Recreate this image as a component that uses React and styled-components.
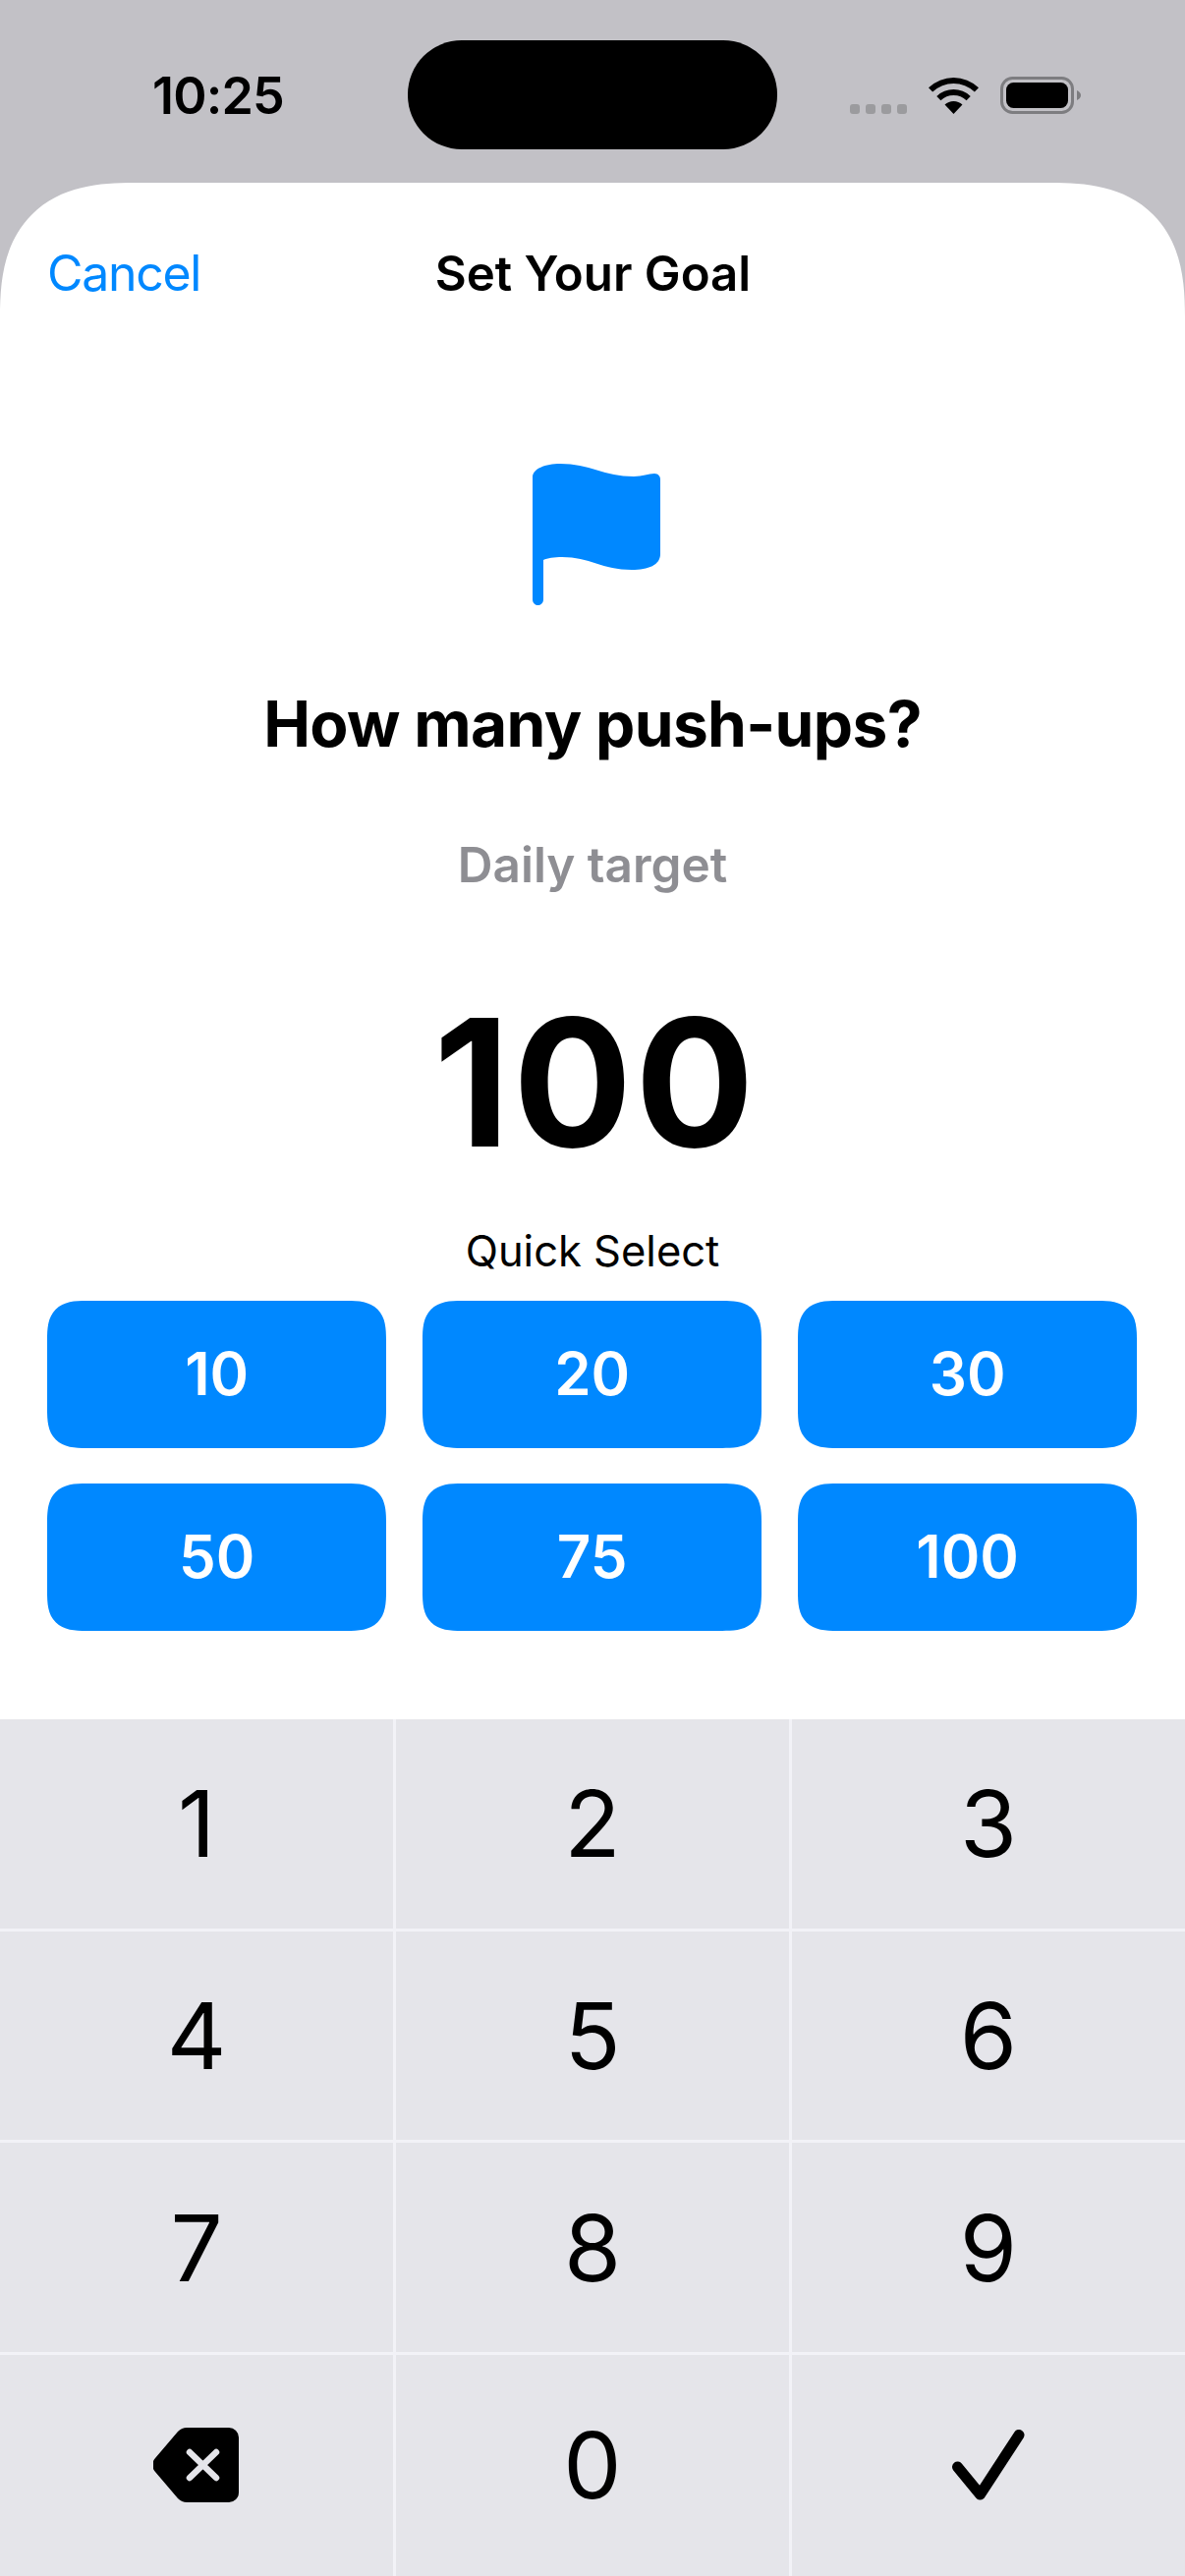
import React from 'react';
import styled, { createGlobalStyle } from 'styled-components';

const Global = createGlobalStyle`
  html, body { margin: 0; padding: 0; background: #c2c1c6; }
  * { box-sizing: border-box; }
  body { font-family: Inter, "Liberation Sans", sans-serif; -webkit-font-smoothing: antialiased; }
`;
const Screen = styled.div`
  width: 1206px; height: 2622px; overflow: hidden; background: #c2c1c6;
  display: flex; flex-direction: column;
`;
const StatusBar = styled.div`
  height: 186px; flex: none; padding-top: 41px;
  display: grid; grid-template-columns: 415px 376px 1fr; align-items: start;
`;
const Time = styled.div`
  font-size: 52px; line-height: 60px; font-weight: 600; color: #000; letter-spacing: -0.8px;
  text-align: left; padding: 27px 0 0 155px;
`;
const Island = styled.div`
  width: 376px; height: 111px; background: #000; border-radius: 55px;
`;
const StatusIcons = styled.div`
  display: flex; align-items: flex-start; padding: 37px 0 0 74px;
`;
const Signal = styled.div`
  display: flex; gap: 6px; margin-top: 28px; margin-right: 22px;
`;
const Dot = styled.span`
  width: 10px; height: 10px; border-radius: 3px; background: #9b9b9e;
`;
const WifiSvg = styled.svg`
  width: 51px; height: 37px; margin-top: 1px; margin-right: 22px; display: block;
`;
const BatterySvg = styled.svg`
  width: 83px; height: 38px; display: block;
`;
const Sheet = styled.div`
  flex: 1; min-height: 0; background: #fff; border-radius: 136px 136px 0 0; corner-shape: superellipse(1.35);
  display: flex; flex-direction: column; align-items: stretch;
`;
const Header = styled.div`
  height: 100px; padding: 61px 48px 0 50px; position: relative;
  display: flex; justify-content: center;
`;
const Cancel = styled.div`
  position: absolute; left: 48px; top: 61px;
  font-size: 50px; line-height: 62px; color: #0088ff; font-weight: 400; letter-spacing: -1.3px;
`;
const Title = styled.div`
  font-size: 49.2px; line-height: 62px; color: #000; font-weight: 600; white-space: nowrap; margin-left: -1px;
`;
const FlagWrap = styled.div`
  display: flex; justify-content: center; margin-top: 186px; padding-left: 8px;
`;
const FlagSvg = styled.svg`
  width: 130px; height: 144px; display: block;
`;
const Question = styled.div`
  margin-top: 81px; text-align: center; font-size: 64px; line-height: 80px; font-weight: 700; color: #000; letter-spacing: -0.65px;
`;
const Subtitle = styled.div`
  margin-top: 73px; text-align: center; font-size: 49.5px; line-height: 60px; font-weight: 600; color: #8e8e93;
`;
const Amount = styled.div`
  margin-top: 82px; padding-left: 6px; text-align: center; font-size: 180px; line-height: 220px; font-weight: 700; color: #000; letter-spacing: 3px;
`;
const QuickLabel = styled.div`
  margin-top: 33px; text-align: center; font-size: 43.5px; line-height: 56px; font-weight: 400; color: #000;
`;
const QuickGrid = styled.div`
  margin-top: 23px; padding: 0 48px;
  display: grid; grid-template-columns: repeat(3, 345.33px); grid-auto-rows: 149.5px; gap: 36.67px;
`;
const QuickButton = styled.div`
  background: #0088ff; color: #fff; border-radius: 40px; corner-shape: superellipse(1.5);
  display: flex; align-items: center; justify-content: center;
  font-size: 60px; font-weight: 600; padding-bottom: 1px;
`;
const Keypad = styled.div`
  margin-top: auto; height: 872px; background: #f2f2f7;
  display: grid; grid-template-columns: 400px 400px 400px; column-gap: 3px;
  grid-template-rows: 212.67px 212.67px 212.67px 1fr; row-gap: 3px;
`;
const Key = styled.div`
  background: #e5e5ea; color: #000; display: flex; align-items: center; justify-content: center;
  font-size: 94px; font-weight: 400;
`;
const BackspaceSvg = styled.svg`
  width: 88px; height: 76px; display: block;
`;
const CheckSvg = styled.svg`
  width: 80px; height: 72px; display: block;
`;

const sector = (cx, cy, r0, r1, a) => {
  const s = Math.sin(a), c = Math.cos(a);
  return `M${cx - r1 * s} ${cy - r1 * c}A${r1} ${r1} 0 0 1 ${cx + r1 * s} ${cy - r1 * c}L${cx + r0 * s} ${cy - r0 * c}A${r0} ${r0} 0 0 0 ${cx - r0 * s} ${cy - r0 * c}Z`;
};

const Wifi = () => (
  <WifiSvg viewBox="0 0 51 37">
    <path fill="#000" d={sector(25.5, 37, 31, 37, 0.76)} />
    <path fill="#000" d={sector(25.5, 37, 19, 25, 0.76)} />
    <path fill="#000" d={sector(25.5, 37, 0, 13, 0.76)} />
  </WifiSvg>
);
const Battery = () => (
  <BatterySvg viewBox="0 0 83 38">
    <rect x="1.5" y="1.5" width="72" height="35" rx="11" fill="none" stroke="#7d7d80" strokeWidth="3" />
    <rect x="6" y="6" width="63" height="26" rx="7.5" fill="#000" />
    <path d="M78 14c2.5 1 4 3 4 5s-1.500 4-4 5z" fill="#7d7d80" />
  </BatterySvg>
);
const Flag = () => (
  <FlagSvg viewBox="42 22 130 144">
    <path fill="#0088ff" d="M42 36C42 27 55 22 70 22C100 22 115 35 145 35C154 35 160 32 166 32C170 32 172 35 172 38L172 114C172 125 160 130 143 130C113 130 100 117 72 117C64 117 57 118 53 120L53 160C53 164 50 166 47.500 166C45 166 42 164 42 160Z" />
  </FlagSvg>
);
const Backspace = () => (
  <BackspaceSvg viewBox="56 92 88 76">
    <path fill="#000" d="M90 92H133A10 10 0 0 1 143 102V158A10 10 0 0 1 133 168H90Q85 168 81 164L58 137Q52 130 58 123L81 96Q85 92 90 92Z" />
    <path fill="none" stroke="#e5e5ea" strokeWidth="6.500" strokeLinecap="round" d="M93 117L120 143M120 117L93 143" />
  </BackspaceSvg>
);
const Check = () => (
  <CheckSvg viewBox="66 94 80 72">
    <path fill="none" stroke="#000" strokeWidth="11" strokeLinecap="round" strokeLinejoin="round" d="M74.500 132L97.500 160L137 99.500" />
  </CheckSvg>
);

const quick = [10, 20, 30, 50, 75, 100];

export default function App() {
  return (
    <Screen>
      <Global />
      <StatusBar>
        <Time>10:25</Time>
        <Island />
        <StatusIcons>
          <Signal><Dot /><Dot /><Dot /><Dot /></Signal>
          <Wifi />
          <Battery />
        </StatusIcons>
      </StatusBar>
      <Sheet>
        <Header>
          <Cancel>Cancel</Cancel>
          <Title>Set Your Goal</Title>
        </Header>
        <FlagWrap><Flag /></FlagWrap>
        <Question>How many push-ups?</Question>
        <Subtitle>Daily target</Subtitle>
        <Amount>100</Amount>
        <QuickLabel>Quick Select</QuickLabel>
        <QuickGrid>
          {quick.map(n => <QuickButton key={n}>{n}</QuickButton>)}
        </QuickGrid>
        <Keypad>
          {[1, 2, 3, 4, 5, 6, 7, 8, 9].map(n => <Key key={n}>{n}</Key>)}
          <Key><Backspace /></Key>
          <Key>0</Key>
          <Key><Check /></Key>
        </Keypad>
      </Sheet>
    </Screen>
  );
}
